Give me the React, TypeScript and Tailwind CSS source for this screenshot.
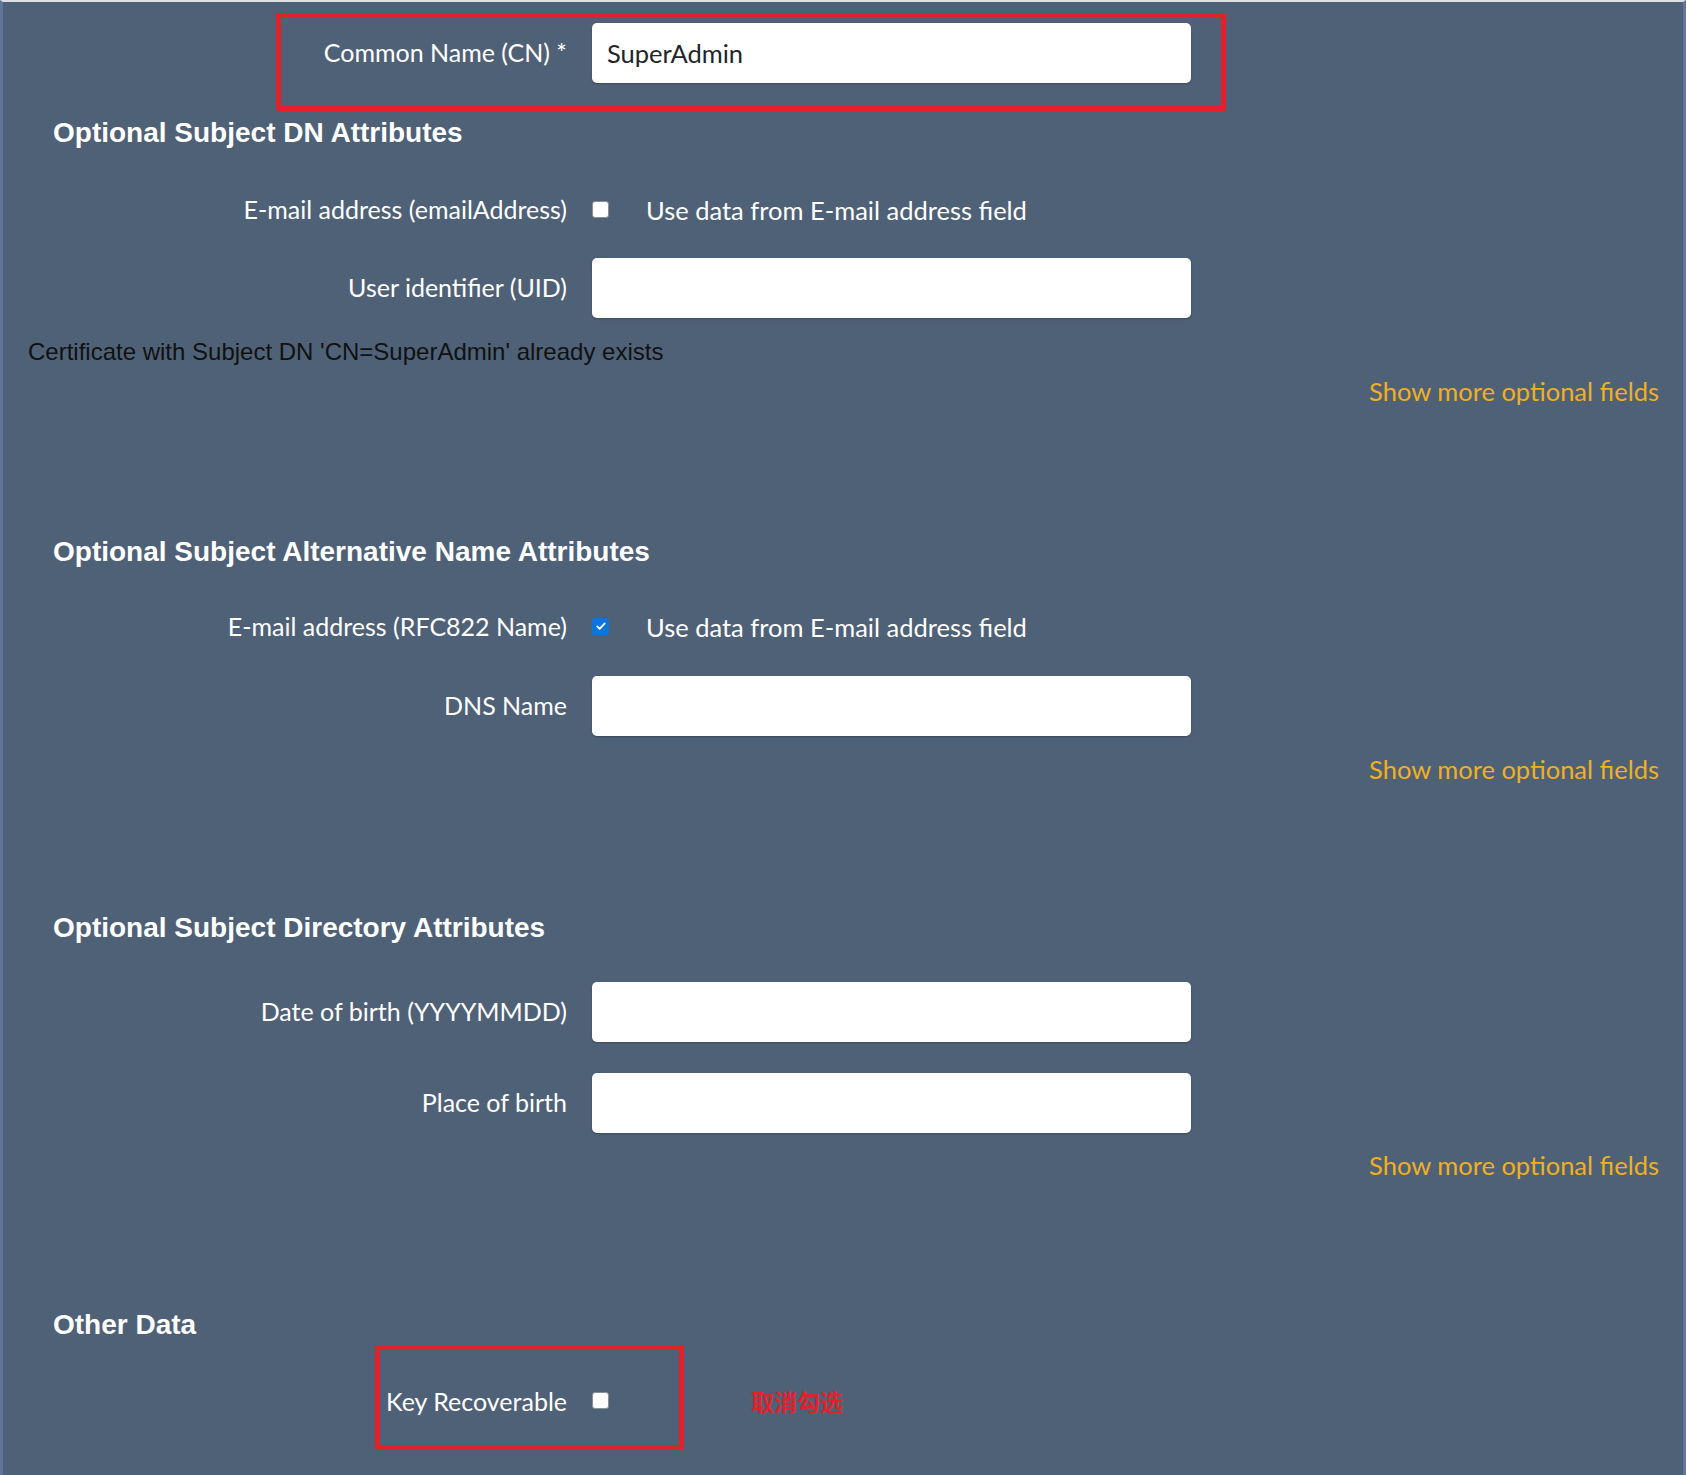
import { useState } from "react";

const labelFont = { fontFamily: "Lato, 'Noto Sans', sans-serif" };

function Heading({ children, className }: { children: string; className: string }) {
  return (
    <h3
      className={`pl-[50px] text-[28px] leading-[34px] font-bold text-white ${className}`}
      style={{ fontFamily: "'Liberation Sans', Arial, sans-serif" }}>
      {children}
    </h3>
  );
}

function FieldRow({ label, value, className }: { label: string; value?: string; className: string }) {
  return (
    <div className={`flex items-center ${className}`}>
      <label className="w-[564px] text-right text-[25px] text-white" style={labelFont}>
        {label}
      </label>
      <input
        className="ml-[25px] w-[599px] h-[60px] rounded-[5px] bg-white px-[15px] text-[25.5px] text-[#212529] shadow-[0_1px_2px_rgba(0,0,0,0.25)] outline-none"
        style={labelFont}
        defaultValue={value}
      />
    </div>
  );
}

function Check({ checked }: { checked?: boolean }) {
  const [on, setOn] = useState(!!checked);
  return (
    <button
      type="button"
      onClick={() => setOn(!on)}
      className={`ml-[25px] -mt-[2px] flex w-[17px] h-[17px] items-center justify-center rounded-[3px] border ${
        on ? "bg-[#0b76d9] border-[#0b76d9]" : "bg-white border-[#8a8f96]"
      }`}>
      {on && (
        <svg viewBox="0 0 16 16" className="w-[12px] h-[12px]">
          <path d="M3 8.5l3.2 3.2L13 4.5" fill="none" stroke="white" strokeWidth="2.4" strokeLinecap="round" strokeLinejoin="round" />
        </svg>
      )}
    </button>
  );
}

function CheckRow({ label, checked, note, className }: { label: string; checked?: boolean; note?: string; className: string }) {
  return (
    <div className={`flex items-center h-[34px] ${className}`}>
      <label className="w-[564px] text-right text-[25px] text-white" style={labelFont}>
        {label}
      </label>
      <Check checked={checked} />
      {note && (
        <span className="ml-[37px] text-[25.5px] text-white" style={labelFont}>
          {note}
        </span>
      )}
    </div>
  );
}

function ShowMore({ className }: { className: string }) {
  return (
    <div className={`flex justify-end pr-[24px] ${className}`}>
      <a className="text-[25.5px] leading-[32px] text-[#f0b020] cursor-pointer" style={labelFont}>
        Show more optional fields
      </a>
    </div>
  );
}

export default function App() {
  return (
    <div className="w-[1686px] h-[1475px] bg-[#4f6177] border-t-2 border-t-[#dde1e6] border-l-[3px] border-l-[#62769a] border-r-[3px] border-r-[#62769a] overflow-hidden">
      <div className="relative">
        <FieldRow label="Common Name (CN) *" value="SuperAdmin" className="mt-[21px]" />
        <div className="absolute left-[273px] top-[-10px] w-[950px] h-[98px] border-[5px] border-[#e3212a] rounded-[2px] pointer-events-none"></div>
      </div>

      <Heading className="mt-[33px]">Optional Subject DN Attributes</Heading>
      <CheckRow label="E-mail address (emailAddress)" note="Use data from E-mail address field" className="mt-[43px]" />
      <FieldRow label="User identifier (UID)" className="mt-[31px]" />
      <p
        className="mt-[20px] pl-[25px] text-[24px] leading-[28px] text-[#111]"
        style={{ fontFamily: "'Liberation Sans', Arial, sans-serif" }}>
        Certificate with Subject DN 'CN=SuperAdmin' already exists
      </p>
      <ShowMore className="mt-[9px]" />

      <Heading className="mt-[128px]">Optional Subject Alternative Name Attributes</Heading>
      <CheckRow label="E-mail address (RFC822 Name)" checked note="Use data from E-mail address field" className="mt-[41px]" />
      <FieldRow label="DNS Name" className="mt-[32px]" />
      <ShowMore className="mt-[17px]" />

      <Heading className="mt-[126px]">Optional Subject Directory Attributes</Heading>
      <FieldRow label="Date of birth (YYYYMMDD)" className="mt-[37px]" />
      <FieldRow label="Place of birth" className="mt-[31px]" />
      <ShowMore className="mt-[16px]" />

      <Heading className="mt-[127px]">Other Data</Heading>
      <div className="relative mt-[42px]">
        <div className="flex items-center">
          <CheckRow label="Key Recoverable" className="" />
          <span
            className="ml-[142px] text-[23px] font-bold text-[#e3212a]"
            style={{ fontFamily: "'Noto Sans CJK SC', sans-serif" }}>
            取消勾选
          </span>
        </div>
        <div className="absolute left-[372px] top-[-39px] w-[309px] h-[105px] border-[5px] border-[#e3212a] rounded-[2px] pointer-events-none"></div>
      </div>
    </div>
  );
}
